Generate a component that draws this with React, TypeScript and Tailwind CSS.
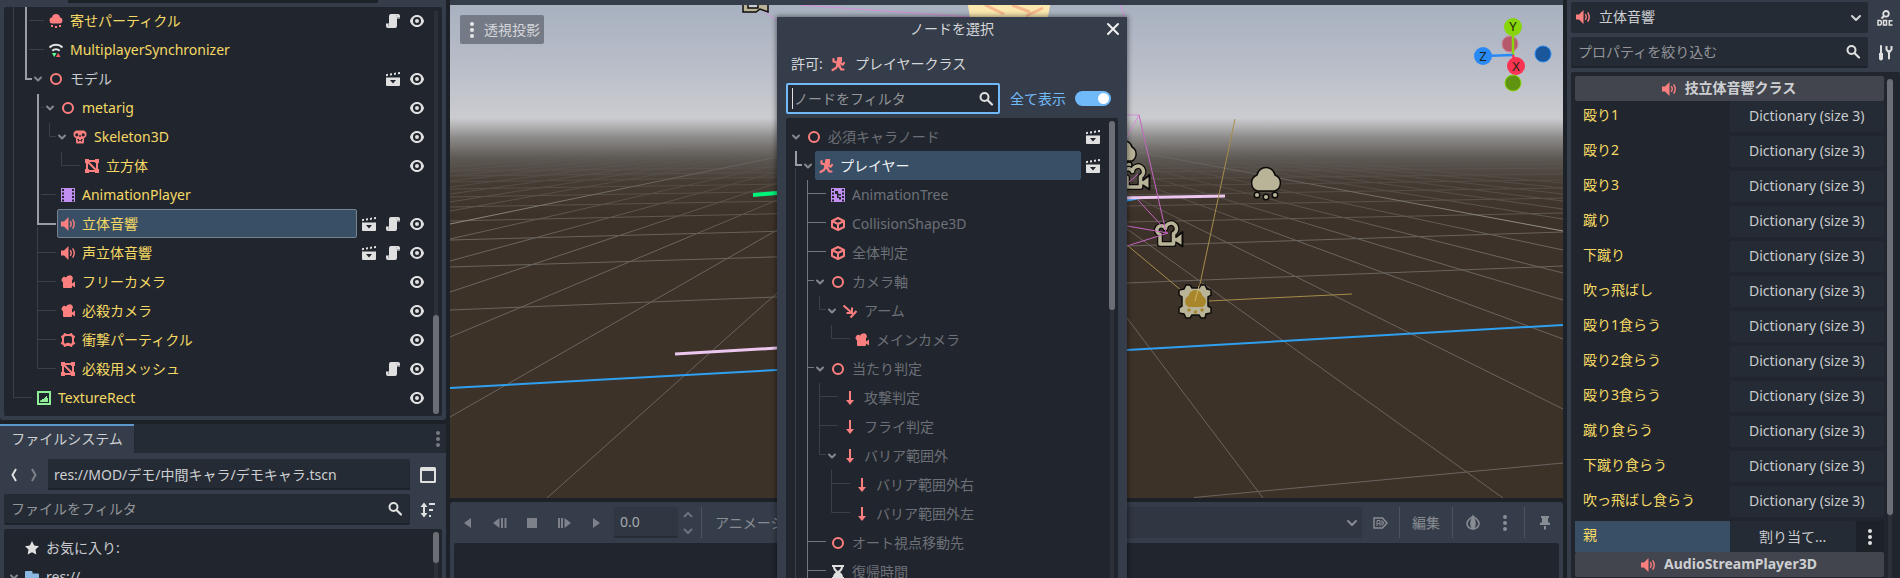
import React from "react";

type IconProps = { className?: string };

function Svg({ className = "", children }: { className?: string; children: React.ReactNode }) {
  return (
    <svg viewBox="0 0 16 16" width="16" height="16" aria-hidden="true" className={"shrink-0 " + className}>
      {children}
    </svg>
  );
}

const RED = "#fc7f7f";
const LIGHT = "#e0e0e0";

const Node3D = () => (
  <Svg>
    <circle cx="8" cy="8" r="5" fill="none" stroke={RED} strokeWidth="2" />
  </Svg>
);
const Cloud = () => (
  <Svg>
    <path fill={RED} d="M8 1a4 4 0 0 0-3.9 3.2A3.2 3.2 0 0 0 4.200 10.500h7.600a3.200 3.200 0 0 0 .1-6.300A4 4 0 0 0 8 1z" />
    <path fill={RED} d="M3 12h2v2H3zM7 13h2v2H7zM11 12h2v2h-2z" />
  </Svg>
);
const Sync = () => (
  <Svg>
    <path d="M1.500 5.500a9 9 0 0 1 13 0M4.300 8.800a5.500 5.500 0 0 1 7.400 0" fill="none" stroke={LIGHT} strokeWidth="2" />
    <path d="M4 11h4.500L6.200 15z" fill="#5fff97" />
    <path d="M8 15h4.500L10.200 11z" fill="#ff5f5f" />
  </Svg>
);
const Skull = () => (
  <Svg>
    <path
      fillRule="evenodd"
      fill={RED}
      d="M5 1.500A4 4 0 0 0 1.500 5c0 2 .8 3.500 2.500 4v4.500a1 1 0 0 0 1 1h6a1 1 0 0 0 1-1V9c1.700-.5 2.500-2 2.500-4A4 4 0 0 0 11 1.500zM4.800 4.200a1.600 1.600 0 1 1 0 3.200 1.600 1.600 0 0 1 0-3.200zm6.400 0a1.600 1.600 0 1 1 0 3.200 1.600 1.600 0 0 1 0-3.200zM7.300 6h1.400v2H7.300zM5.500 10H7v1.300h2V10h1.500v1.300H9.800v1.500H9v-.8H7v.8h-.8v-1.500h-.7z"
    />
  </Svg>
);
const Mesh = () => (
  <Svg>
    <path d="M3 3h10v10H3zM3 3l10 10" fill="none" stroke={RED} strokeWidth="2" />
    <path fill={RED} d="M1 1h4v4H1zM11 1h4v4h-4zM1 11h4v4H1zM11 11h4v4h-4z" />
  </Svg>
);
const Film = () => (
  <Svg>
    <path
      fillRule="evenodd"
      fill="#c38ef1"
      d="M1 1h14v14H1zM2 2v2h2V2zm0 3.500v2h2v-2zM2 9v2h2V9zm0 3.500v2h2v-2zM12 2v2h2V2zm0 3.500v2h2v-2zM12 9v2h2V9zm0 3.500v2h2v-2z"
    />
  </Svg>
);
const FilmTree = () => (
  <Svg>
    <path
      fillRule="evenodd"
      fill="#c38ef1"
      d="M1 1h14v14H1zM2 2v2h2V2zm0 3.500v2h2v-2zM2 9v2h2V9zm0 3.500v2h2v-2zM12 2v2h2V2zm0 3.500v2h2v-2zM12 9v2h2V9zm0 3.500v2h2v-2z"
    />
    <path d="M5 4h3v3H5zM7 6h1.500v1H11v1.500H8.500V10H11v2.500H9V11H7z" fill="#21262e" />
  </Svg>
);
const Speaker = ({ className }: IconProps) => (
  <Svg className={className}>
    <path fill={RED} d="M8.500 1v14L4 10.500H1v-5h3z" />
    <path d="M10.300 5.200q1.800 2.800 0 5.600M12.600 3.300q3.200 4.700 0 9.400" fill="none" stroke={RED} strokeWidth="1.400" />
  </Svg>
);
const Camera = () => (
  <Svg>
    <path
      fill={RED}
      d="M9 1.500A3 3 0 0 0 6.200 3.400 2.800 2.800 0 1 0 3 8.300V13a1 1 0 0 0 1 1h7a1 1 0 0 0 1-1v-1.500l3 2v-6l-3 2V6.500A3 3 0 0 0 9 1.500z"
    />
  </Svg>
);
const Collider = () => (
  <Svg>
    <rect x="3" y="3" width="10" height="10" rx="3" fill="none" stroke={RED} strokeWidth="2" />
    <path fill={RED} d="M5.500 11.500q2.500-1.500 5 0V13h-5z" />
    <g fill={RED}>
      <circle cx="4.800" cy="2.200" r="1.200" />
      <circle cx="11.200" cy="2.200" r="1.200" />
      <circle cx="2.200" cy="4.800" r="1.200" />
      <circle cx="13.800" cy="4.800" r="1.200" />
      <circle cx="2.200" cy="11.200" r="1.200" />
      <circle cx="13.800" cy="11.200" r="1.200" />
      <circle cx="4.800" cy="13.800" r="1.200" />
      <circle cx="11.200" cy="13.800" r="1.200" />
    </g>
  </Svg>
);
const TextureRect = () => (
  <Svg>
    <rect x="2" y="2" width="12" height="12" fill="none" stroke="#8eef97" strokeWidth="2" />
    <path fill="#8eef97" d="M4 12v-1.500h1V10h1V9h2V8h1V7h1V6h1v2h1v4z" />
  </Svg>
);
const Runner = () => (
  <Svg>
    <path fill={RED} d="M7.500 1h4.500v4.500L10.500 7v4H7L6 9z" />
    <path
      d="M3.500 3v2.500L7 6.500M7.500 9.500L6 12l-3.500 2M9 10l1.500 2 .5 1.500h2.500M10 6.500l2.500 2.300 1.500-2"
      fill="none"
      stroke={RED}
      strokeWidth="2.200"
      strokeLinejoin="round"
      strokeLinecap="round"
    />
  </Svg>
);
const Cube = () => (
  <Svg>
    <path d="M8 2l6 3v6l-6 3-6-3V5zM2 5l6 3 6-3M8 8v6" fill="none" stroke={RED} strokeWidth="2" strokeLinejoin="round" />
  </Svg>
);
const SpringArm = () => (
  <Svg>
    <path d="M1.500 2.500L10 10M10 4.500V10H4.500M8.500 14.500l6-6.500" fill="none" stroke={RED} strokeWidth="2" />
  </Svg>
);
const Ray = () => (
  <Svg>
    <path d="M7 1h2v9h3l-4 5-4-5h3z" fill={RED} />
  </Svg>
);
const Hourglass = () => (
  <Svg>
    <path
      fillRule="evenodd"
      fill={LIGHT}
      d="M2 1h12v2h-1c0 2.500-1.500 4-3 5.200 1.500 1 3 2.500 3 4.800h1v2H2v-2h1c0-2.300 1.500-3.800 3-4.800C4.500 7 3 5.500 3 3H2zm3 2c.3 1.800 1.500 3 3 4 1.500-1 2.700-2.200 3-4z"
    />
  </Svg>
);
const Star = () => (
  <Svg>
    <path fill={LIGHT} d="M8 1l2.200 4.500 4.800.7-3.500 3.400.8 4.900L8 12.200l-4.300 2.300.8-4.900L1 6.200l4.800-.7z" />
  </Svg>
);
const Folder = () => (
  <Svg>
    <path fill="#8ab8e0" d="M1 3a1 1 0 0 1 1-1h5.500a1 1 0 0 1 1 1v1.500H14a1 1 0 0 1 1 1V13a1 1 0 0 1-1 1H2a1 1 0 0 1-1-1z" />
  </Svg>
);
const Eye = () => (
  <Svg>
    <path
      fillRule="evenodd"
      fill={LIGHT}
      d="M8 2C4.400 2 2 4.700 1 7.800v.4C2 11.300 4.400 14 8 14s6-2.700 7-5.800v-.4C14 4.700 11.600 2 8 2zm0 2a4 4 0 0 1 0 8 4 4 0 0 1 0-8zm0 2a2 2 0 1 0 0 4 2 2 0 0 0 0-4z"
    />
  </Svg>
);
const Script = () => (
  <Svg>
    <path fill={LIGHT} d="M6 1a2 2 0 0 0-2 2v7.500H1V13a2 2 0 0 0 2 2h7a2 2 0 0 0 2-2V5.500h3V3a2 2 0 0 0-2-2z" />
    <path fill="#a3a5a8" d="M11 2h1v3h3V4h-3zM3 11h1v2.500H3z" />
  </Svg>
);
const Clapper = () => (
  <Svg>
    <path fill={LIGHT} d="M1 3.200l2-.4v2l-2 .4zM5 2.600l2-.4v2l-2 .4zM9 1.900l2-.3v2l-2 .3zM13 1.300l2-.3v2l-2 .3z" />
    <path fillRule="evenodd" fill={LIGHT} d="M1 6.500h14V14a1 1 0 0 1-1 1H2a1 1 0 0 1-1-1zM5 9l3 3.500L11 9z" />
  </Svg>
);
const Magnifier = () => (
  <Svg>
    <circle cx="6.500" cy="6" r="4" fill="none" stroke={LIGHT} strokeWidth="2" />
    <path d="M9.500 9l4.500 4.500" stroke={LIGHT} strokeWidth="2.200" strokeLinecap="round" />
  </Svg>
);
const Chevron = ({ className }: IconProps) => (
  <Svg className={className}>
    <path d="M4 6l4 4 4-4" fill="none" stroke="currentColor" strokeWidth="2" strokeLinecap="round" strokeLinejoin="round" />
  </Svg>
);
const Dots = ({ className }: IconProps) => (
  <Svg className={className}>
    <circle cx="8" cy="2" r="2" fill="currentColor" />
    <circle cx="8" cy="8" r="2" fill="currentColor" />
    <circle cx="8" cy="14" r="2" fill="currentColor" />
  </Svg>
);

type TreeItem = {
  level: number;
  label: string;
  icon: React.ReactNode;
  open?: boolean;
  tone?: "gold" | "light" | "dim" | "bright";
  selected?: boolean;
  boxed?: boolean;
  buttons?: string;
};

const PAD = ["pl-1", "pl-4", "pl-7", "pl-10", "pl-13", "pl-16"];
const TONES = {
  gold: "text-[#f5d964]",
  light: "text-[#c9cbce]",
  dim: "text-[#6d7077]",
  bright: "text-[#f2f3f4]",
};

function TreeRow({ item }: { item: TreeItem }) {
  const buttons = item.buttons ?? "";
  return (
    <li className={"flex h-[29px] shrink-0 items-center pr-[17px] " + PAD[item.level]}>
      <span className="flex w-[13px] shrink-0 items-center">
        {item.open && (
          <button aria-label={item.label + " を折りたたむ"} className="block">
            <svg viewBox="0 0 12 12" width="12" height="12" aria-hidden="true">
              <path d="M3 4.500l3 3 3-3" fill="none" stroke="#85888e" strokeWidth="2" strokeLinecap="round" strokeLinejoin="round" />
            </svg>
          </button>
        )}
      </span>
      <button
        className={
          "flex h-full min-w-0 flex-1 items-center gap-[6px] border px-[2px] text-left whitespace-nowrap " +
          (item.selected
            ? "rounded-[2px] bg-[#384f66] " + (item.boxed ? "border-[#76828f] " : "border-[#384f66] ")
            : "border-transparent ") +
          TONES[item.tone ?? "gold"]
        }
      >
        {item.icon}
        <span>{item.label}</span>
      </button>
      {buttons && (
        <span className="ml-1 flex shrink-0 gap-2">
          {buttons.includes("c") && <button aria-label="シーンを開く"><Clapper /></button>}
          {buttons.includes("s") && <button aria-label="スクリプトを開く"><Script /></button>}
          {buttons.includes("e") && <button aria-label="表示切り替え"><Eye /></button>}
        </span>
      )}
    </li>
  );
}

const SCENE: TreeItem[] = [
  { level: 2, label: "寄せパーティクル", icon: <Cloud />, buttons: "se" },
  { level: 2, label: "MultiplayerSynchronizer", icon: <Sync /> },
  { level: 2, label: "モデル", icon: <Node3D />, open: true, tone: "light", buttons: "ce" },
  { level: 3, label: "metarig", icon: <Node3D />, open: true, buttons: "e" },
  { level: 4, label: "Skeleton3D", icon: <Skull />, open: true, buttons: "e" },
  { level: 5, label: "立方体", icon: <Mesh />, buttons: "e" },
  { level: 3, label: "AnimationPlayer", icon: <Film /> },
  { level: 3, label: "立体音響", icon: <Speaker />, selected: true, boxed: true, buttons: "cse" },
  { level: 3, label: "声立体音響", icon: <Speaker />, buttons: "cse" },
  { level: 3, label: "フリーカメラ", icon: <Camera />, buttons: "e" },
  { level: 3, label: "必殺カメラ", icon: <Camera />, buttons: "e" },
  { level: 3, label: "衝撃パーティクル", icon: <Collider />, buttons: "e" },
  { level: 3, label: "必殺用メッシュ", icon: <Mesh />, buttons: "se" },
  { level: 1, label: "TextureRect", icon: <TextureRect />, buttons: "e" },
];

const PICKER: TreeItem[] = [
  { level: 0, label: "必須キャラノード", icon: <Node3D />, open: true, tone: "dim", buttons: "c" },
  { level: 1, label: "プレイヤー", icon: <Runner />, open: true, tone: "bright", selected: true, buttons: "c" },
  { level: 2, label: "AnimationTree", icon: <FilmTree />, tone: "dim" },
  { level: 2, label: "CollisionShape3D", icon: <Cube />, tone: "dim" },
  { level: 2, label: "全体判定", icon: <Cube />, tone: "dim" },
  { level: 2, label: "カメラ軸", icon: <Node3D />, open: true, tone: "dim" },
  { level: 3, label: "アーム", icon: <SpringArm />, open: true, tone: "dim" },
  { level: 4, label: "メインカメラ", icon: <Camera />, tone: "dim" },
  { level: 2, label: "当たり判定", icon: <Node3D />, open: true, tone: "dim" },
  { level: 3, label: "攻撃判定", icon: <Ray />, tone: "dim" },
  { level: 3, label: "フライ判定", icon: <Ray />, tone: "dim" },
  { level: 3, label: "バリア範囲外", icon: <Ray />, open: true, tone: "dim" },
  { level: 4, label: "バリア範囲外右", icon: <Ray />, tone: "dim" },
  { level: 4, label: "バリア範囲外左", icon: <Ray />, tone: "dim" },
  { level: 2, label: "オート視点移動先", icon: <Node3D />, tone: "dim" },
  { level: 2, label: "復帰時間", icon: <Hourglass />, tone: "dim" },
];

const FILES: TreeItem[] = [
  { level: 0, label: "お気に入り:", icon: <Star />, tone: "light" },
  { level: 0, label: "res://", icon: <Folder />, open: true, tone: "light" },
];

const PROPERTIES = [
  "殴り1", "殴り2", "殴り3", "蹴り", "下蹴り", "吹っ飛ばし",
  "殴り1食らう", "殴り2食らう", "殴り3食らう", "蹴り食らう", "下蹴り食らう", "吹っ飛ばし食らう",
];

function SceneGuides() {
  return (
    <svg viewBox="4 5 438 406" width="438" height="406" fill="none" aria-hidden="true" className="pointer-events-none absolute top-0 left-0">
      <path
        stroke="#3b4048"
        d="M13.500 5V396.500H32M29 19.500H44M29 48.500H44M41 106.500H44M49.500 122V135.500H56M61.500 151V164.500H80M41 193.500H56M37.500 226V367.500H56M37.500 251.500H56M37.500 280.500H56M37.500 309.500H56M37.500 338.500H56"
      />
      <path stroke="#9a9da1" strokeWidth="2" d="M26 5V78H32M38 93V223H56" />
    </svg>
  );
}

function PickerGuides() {
  return (
    <svg viewBox="786 122 332 464" width="332" height="464" fill="none" aria-hidden="true" className="pointer-events-none absolute top-0 left-0">
      <path
        stroke="#3b4048"
        d="M795.500 168V586M819.500 296V309.500H826M831.500 325V338.500H850M819.500 383V454.500H826M819.500 396.500H838M819.500 425.500H838M831.500 470V512.500H850M831.500 483.500H850"
      />
      <path
        stroke="#74777c"
        d="M807.500 180V586M807.500 193.500H826M807.500 222.500H826M807.500 251.500H826M807.500 280.500H814M807.500 367.500H814M807.500 541.500H826M807.500 570.500H826"
      />
      <path stroke="#9a9da1" strokeWidth="2" d="M796 151V165H802" />
    </svg>
  );
}

function SearchBox({ id, label, className = "px-[7px]" }: { id: string; label: string; className?: string }) {
  return (
    <div className={"flex h-[31px] min-w-0 flex-1 items-center rounded-[2px] bg-[#252b34] " + className}>
      <input
        id={id}
        aria-label={label}
        placeholder={label}
        className="min-w-0 flex-1 bg-transparent text-[#c9cbce] outline-none placeholder:text-[#92959a] placeholder:opacity-100"
      />
      <Magnifier />
    </div>
  );
}

function LeftDocks() {
  return (
    <aside className="flex w-[446px] shrink-0 flex-col gap-1">
      <section className="flex h-[420px] shrink-0 flex-col rounded-b-[3px] bg-[#363d4a] px-1 pb-1">
        <div className="mr-16 mb-1 ml-16 h-[3px] shrink-0 bg-[#1e232a]" />
        <div className="relative flex min-h-0 flex-1 flex-col justify-end overflow-hidden rounded-[2px] bg-[#21262e] pb-1">
          <div className="relative shrink-0">
            <SceneGuides />
            <ul className="relative">{SCENE.map((i) => <TreeRow key={i.label} item={i} />)}</ul>
          </div>
          <span className="absolute top-1 right-1 bottom-[2px] w-[4px] bg-[#2c3139]" />
          <span className="absolute right-[3px] bottom-[2px] h-[99px] w-[6px] rounded-full bg-[#6b6e74]" />
        </div>
      </section>
      <section className="flex min-h-0 flex-1 flex-col bg-[#363d4a]">
        <div className="flex h-[29px] shrink-0 items-center justify-between rounded-t-[2px] bg-[#252b34]">
          <button className="h-full w-[134px] border-t-2 border-[#5b98cd] bg-[#363d4a] pb-[2px] text-[#cdcfd2]">ファイルシステム</button>
          <button aria-label="ドックメニュー" className="text-[#777a80]"><Dots /></button>
        </div>
        <div className="flex min-h-0 flex-1 flex-col gap-1 px-1 pt-[6px]">
          <div className="flex shrink-0 items-center">
            <button aria-label="戻る" className="flex w-5 justify-center text-[#e0e0e0]">
              <svg viewBox="0 0 8 16" width="8" height="16" fill="none"><path d="M6 2L2.500 8 6 14" stroke="currentColor" strokeWidth="2" /></svg>
            </button>
            <button aria-label="進む" className="mr-1 flex w-5 justify-center text-[#7e8289]">
              <svg viewBox="0 0 8 16" width="8" height="16" fill="none"><path d="M2 2l3.500 6L2 14" stroke="currentColor" strokeWidth="2" /></svg>
            </button>
            <input
              aria-label="パス"
              defaultValue="res://MOD/デモ/中間キャラ/デモキャラ.tscn"
              className="h-[31px] min-w-0 flex-1 rounded-t-[2px] border-b-2 border-[#1e232b] bg-[#252b34] px-[6px] text-[#cdcfd2] outline-none"
            />
            <button aria-label="分割モード" className="flex w-8 justify-center pl-1">
              <svg viewBox="0 0 16 16" width="16" height="16"><path fillRule="evenodd" fill={LIGHT} d="M1.500 0h13A1.500 1.500 0 0 1 16 1.500v13a1.500 1.500 0 0 1-1.500 1.500h-13A1.500 1.500 0 0 1 0 14.500v-13A1.500 1.500 0 0 1 1.500 0zM2 4v10h12V4z" /></svg>
            </button>
          </div>
          <div className="flex shrink-0 items-center">
            <SearchBox id="file-filter" label="ファイルをフィルタ" className="border-b-2 border-[#1e232b] px-[7px]" />
            <button aria-label="並べ替え" className="flex w-8 justify-center pl-1">
              <Svg>
                <path d="M4 4v8" stroke={LIGHT} strokeWidth="2" />
                <path d="M4 .5L7.500 5h-7zM4 15.500L7.500 11h-7zM9 1h6v2H9zM9 7h4v2H9zM9 13h2v2H9z" fill={LIGHT} />
              </Svg>
            </button>
          </div>
          <div className="relative min-h-0 flex-1 overflow-hidden rounded-t-[2px] bg-[#21262e] pt-1">
            <ul>{FILES.map((i) => <TreeRow key={i.label} item={i} />)}</ul>
            <span className="absolute top-1 right-1 bottom-0 w-[4px] bg-[#2c3139]" />
            <span className="absolute top-[3px] right-[3px] h-[31px] w-[6px] rounded-full bg-[#6b6e74]" />
          </div>
        </div>
      </section>
    </aside>
  );
}

const CAMERA_REELS = "M8 14.500A4.500 4.500 0 1 1 13.500 8.500A5.500 5.500 0 1 1 21.500 13.500V24H8z";
const CAMERA_LENS = "M23.500 17.500L30.500 12V26.500L23.500 22z";

function CameraGizmo({ x, y }: { x: number; y: number }) {
  return (
    <g transform={`translate(${x} ${y})`} fill="none" strokeLinejoin="round">
      <path d={CAMERA_REELS} stroke="#0c0b09" strokeWidth="6" />
      <path d={CAMERA_LENS} fill="#b9b498" stroke="#0c0b09" strokeWidth="2" />
      <path d={CAMERA_REELS} stroke="#b9b498" strokeWidth="3.500" />
      <path d="M21 19.700h5" stroke="#b9b498" strokeWidth="3.500" />
    </g>
  );
}

function SceneView() {
  return (
    <svg viewBox="450 5 1113 493" preserveAspectRatio="xMidYMid slice" aria-label="3Dビュー" className="absolute inset-0 h-full w-full">
      <defs>
        <linearGradient id="sky" x1="0" y1="0" x2="0" y2="1">
          <stop offset="0" stopColor="#a8b1c0" />
          <stop offset="0.120" stopColor="#b8bdc8" />
          <stop offset="0.229" stopColor="#cbccd0" />
          <stop offset="0.245" stopColor="#b4b4b5" />
          <stop offset="0.270" stopColor="#8b8987" />
          <stop offset="0.310" stopColor="#5e5954" />
          <stop offset="0.360" stopColor="#443b33" />
          <stop offset="0.430" stopColor="#3d3229" />
          <stop offset="1" stopColor="#3d3228" />
        </linearGradient>
        <linearGradient id="fade" x1="0" y1="142" x2="0" y2="240" gradientUnits="userSpaceOnUse">
          <stop offset="0" stopColor="#fff" stopOpacity="0" />
          <stop offset="0.500" stopColor="#fff" stopOpacity="0.500" />
          <stop offset="1" stopColor="#fff" />
        </linearGradient>
        <mask id="horizon" maskUnits="userSpaceOnUse" x="450" y="5" width="1113" height="493">
          <rect x="450" y="5" width="1113" height="493" fill="url(#fade)" />
        </mask>
      </defs>
      <rect x="450" y="5" width="1113" height="493" fill="url(#sky)" />
      <g mask="url(#horizon)" fill="none" stroke="#6a6560" strokeWidth="1">
        <path d="M450 239L777 165M450 261L777 172M450 292L777 183M450 337L777 200M450 417L777 230M547 498L777 293M450 211L777 153M450 202L777 150M450 194L777 148M450 187L777 146M450 181L777 144M450 176L777 143M450 171L777 142M450 167L777 141" />
        <path d="M450 310L1127 283 1563 266M450 267L1127 246 1563 232M450 240L1127 222 1563 213M450 221L1127 206 1563 198M450 207L1127 195 1563 188M450 197L1127 186 1563 180M450 189L1127 179 1563 174M450 182L1127 172 1563 168M450 176L1563 164M450 171L1563 160M1194 497.500L1563 463" />
        <path d="M1127 318L1263 498M1127 229L1310 360 1503 498M1127 193L1563 409M1127 178L1563 339M1127 170L1563 300M1127 163L1563 273M1127 157L1563 250M1127 149L1563 219M1127 148L1563 209M1127 146L1563 201M1127 145L1563 194M1127 144L1563 188M1127 143L1563 183" />
        <path d="M450 224L777 157M1127 150L1563 231" stroke="#a09e9a" />
      </g>
      <path d="M450 388L777 370 1127 350 1563 325" fill="none" stroke="#2f9ff0" strokeWidth="2" />
      <path d="M675 354L777 348" stroke="#ecc6ee" strokeWidth="3" />
      <path d="M753 195L777 193" stroke="#00f57a" strokeWidth="4" />
      <path d="M1120 203L1140 199V197H1120z" fill="#2f9ff0" />
      <path d="M1120 198L1225 196" stroke="#ecc6ee" strokeWidth="3" />
      <g fill="none" stroke="#c565c4">
        <path d="M1127 115H1139M1127 137L1139 115M758 6L780 24M800 5L970 17M1120 5L1127 22" stroke="#d58fd8" />
      </g>
      <path d="M1235 119L1200 284 1195 301M1127 245L1182 291M1208 301L1352 294" fill="none" stroke="#a58d4b" />
      <path d="M967 0H1051L1048 17H970z" fill="#fbe8ae" />
      <path d="M985 5L1004 14M1012 5L1030 12M1026 16L1043 8" stroke="#f6b98e" strokeWidth="3" />
      <g fill="#b9b498" stroke="#0c0b09" strokeWidth="1.500">
        <path d="M743 0V12H756L760 9 768 12V0z" />
        <path d="M748 0V8H758V0z" fill="#cacdd4" />
        <path d="M1120 142a8 8 0 0 1 12 5 8 8 0 0 1 0 14h-12z" />
        <circle cx="1129" cy="165" r="3" />
        <path d="M1266 167.500a9 9 0 0 0-9 7.500 8.500 8.500 0 0 0 .5 16h17a8.500 8.500 0 0 0 .5-16 9 9 0 0 0-9-7.500z" />
        <circle cx="1257" cy="195" r="2.800" />
        <circle cx="1266" cy="197" r="2.800" />
        <circle cx="1275" cy="195" r="2.800" />
        <path d="M1184 289l2-4h4l2 3h7l2-3h4l2 4 4 1v5l-3 2v9l3 2v5l-5 1-1 4h-4l-2-3h-7l-2 3h-4l-2-4-5-1v-5l3-2v-9l-3-2v-5z" />
      </g>
      <CameraGizmo x={1119} y={163} />
      <CameraGizmo x={1152} y={220} />
      <path d="M1139 115L1166 232M1138 200L1162 226M1127 226L1168 233 1127 246M1129 182L1138 174" fill="none" stroke="#c565c4" />
      <path d="M1195.500 290a7.500 7.500 0 0 0-7 6 6 6 0 0 0 .5 11h13a6 6 0 0 0 .5-11 7.500 7.500 0 0 0-7-6z" fill="#a8862b" />
      <g fill="#a8862b">
        <circle cx="1189" cy="310" r="1.700" />
        <circle cx="1195.500" cy="312" r="1.700" />
        <circle cx="1202" cy="310" r="1.700" />
      </g>
      <path d="M1199 286l-4 15" stroke="#d0b56a" />
      <circle cx="1510" cy="44" r="8" fill="#b85a6e" stroke="#c98594" />
      <path d="M1513 27V55" stroke="#88d60a" strokeWidth="2.500" />
      <path d="M1483 56L1513 55" stroke="#2989f5" strokeWidth="2.500" />
      <path d="M1513 55L1516 66" stroke="#fa3352" strokeWidth="2.500" />
      <circle cx="1543" cy="54" r="8" fill="#19579a" stroke="#2989f5" />
      <circle cx="1513" cy="83" r="8" fill="#609410" stroke="#88d60a" />
      <circle cx="1513" cy="27" r="9" fill="#88d60a" />
      <circle cx="1483" cy="56" r="9" fill="#2989f5" />
      <circle cx="1516" cy="66" r="9" fill="#fa3352" />
      <g fontFamily="Noto Sans, sans-serif" fontSize="13" textAnchor="middle" fill="#1b2410">
        <text x="1513" y="31">Y</text>
        <text x="1483" y="61">Z</text>
        <text x="1516" y="71">X</text>
      </g>
    </svg>
  );
}

const Divider = () => <span className="h-[31px] w-px shrink-0 bg-[#4c535f]" />;

const TRANSPORT = [
  { label: "逆再生", d: "M11 3v10L4 8z" },
  { label: "最後から逆再生", d: "M7.500 3v10L1 8zM9 3h2v10H9zM12.500 3h2v10h-2z" },
  { label: "停止", d: "M3 3h10v10H3z" },
  { label: "最初から再生", d: "M2 3h2v10H2zM5 3h2v10H5zM8.500 3v10L15 8z" },
  { label: "再生", d: "M5 3v10l7-5z" },
];

function Center() {
  return (
    <main className="flex min-w-0 flex-1 flex-col">
      <div className="h-[5px] shrink-0 bg-[#363d4a]" />
      <section className="relative h-[493px] shrink-0 overflow-hidden">
        <SceneView />
        <button className="absolute top-[10px] left-[10px] flex h-[29px] w-[84px] items-center gap-1 rounded-[2px] bg-[#747a86] pl-1 text-[#d5d7da]">
          <Dots className="text-[#e6e6e6]" />
          <span>透視投影</span>
        </button>
      </section>
      <section className="mt-1 flex min-h-0 flex-1 flex-col rounded-t-[3px] bg-[#363d4a] px-1">
        <div className="flex h-[41px] shrink-0 items-center justify-between text-[#888c93]">
          <div className="flex items-center pl-[6px]">
            <div className="flex gap-4">
              {TRANSPORT.map((t) => (
                <button key={t.label} aria-label={t.label}>
                  <Svg><path d={t.d} fill="#7d8189" /></Svg>
                </button>
              ))}
            </div>
            <input
              aria-label="再生位置"
              defaultValue="0.0"
              className="ml-[10px] h-[31px] w-16 rounded-t-[2px] border-b-2 border-[#272c36] bg-[#303642] px-[6px] text-[#a6a9ae] outline-none"
            />
            <svg viewBox="0 0 12 24" width="12" height="24" fill="none" aria-hidden="true" className="mr-[7px] ml-1">
              <path d="M2 6l4-4 4 4M2 18l4 4 4-4" stroke="#6c717a" strokeWidth="2" />
            </svg>
            <Divider />
            <button className="ml-[13px]">アニメーション</button>
          </div>
          <div className="flex items-center">
            <div className="relative">
              <select aria-label="アニメーション" className="block h-[31px] w-[300px] appearance-none rounded-[2px] bg-[#303642] px-2 outline-none" />
              <Chevron className="pointer-events-none absolute top-2 right-[2px]" />
            </div>
            <button aria-label="自動再生" className="mr-[11px] ml-[10px]">
              <Svg>
                <path d="M2 3h8.500l4.500 5-4.500 5H2z" fill="none" stroke="#888c93" strokeWidth="1.500" />
                <path d="M5 11V5.500h3V11M5 8.500h3M10 5.500v5L12 8z" fill="none" stroke="#888c93" />
              </Svg>
            </button>
            <Divider />
            <button className="mx-3">編集</button>
            <Divider />
            <button aria-label="オニオンスキン" className="ml-3">
              <Svg>
                <path d="M8 1c2 2.500 6 3.500 6 7.500 0 3-2.500 5.500-6 5.500s-6-2.500-6-5.500C2 4.500 6 3.500 8 1z" fill="none" stroke="#888c93" strokeWidth="1.500" />
                <path d="M8 1c2 3 2.800 5 2.800 7.500S10 13 8 15c-2-2-2.800-4-2.800-6.500S6 4 8 1z" fill="#888c93" />
              </Svg>
            </button>
            <button aria-label="オプション" className="mr-[11px] ml-4"><Dots /></button>
            <Divider />
            <button aria-label="ピン" className="mr-[6px] ml-3">
              <Svg><path d="M4 1h8v2h-1v4l2 1v2H3V8l2-1V3H4zM7 11h2v3l-1 1-1-1z" fill="#888c93" /></Svg>
            </button>
          </div>
        </div>
        <div className="min-h-0 flex-1 rounded-t-[2px] bg-[#21262e]" />
      </section>
    </main>
  );
}

function ClassHeader({ label }: { label: string }) {
  return (
    <h2 className="flex h-[25px] shrink-0 items-center justify-center gap-2 rounded-[2px] bg-[#42454d] pr-[2px] font-bold text-[#cdcfd2]">
      <Speaker />
      <span className="pb-[2px]">{label}</span>
    </h2>
  );
}

function Inspector() {
  return (
    <aside className="flex w-[333px] shrink-0 flex-col gap-1 bg-[#363d4a] pt-[2px] pl-1">
      <div className="flex shrink-0 items-center">
        <div className="relative min-w-0 flex-1">
          <Speaker className="pointer-events-none absolute top-[7px] left-1" />
          <select aria-label="ノード" className="block h-[31px] w-full appearance-none rounded-[2px] bg-[#252b34] pr-6 pb-[2px] pl-7 text-[#cdcfd2] outline-none">
            <option>立体音響</option>
          </select>
          <Chevron className="pointer-events-none absolute top-2 right-1 text-[#d5d6d8]" />
        </div>
        <button aria-label="ドキュメントを開く" className="flex w-8 justify-center pl-[2px]">
          <Svg>
            <circle cx="9" cy="3.800" r="2.800" fill="none" stroke={LIGHT} strokeWidth="1.800" />
            <path d="M7 6L4.500 8.500" stroke={LIGHT} strokeWidth="2" />
            <path d="M1 10.500h2.200q1.300.5 1.300 2.200t-1.300 2.300H1zM6.500 10.500h3V15h-3zM15.500 10.700h-3.200V15h3.200" fill="none" stroke={LIGHT} strokeWidth="1.500" />
          </Svg>
        </button>
      </div>
      <div className="flex shrink-0 items-center">
        <SearchBox id="prop-filter" label="プロパティを絞り込む" className="border-b-2 border-[#1e232b] px-[7px]" />
        <button aria-label="オブジェクト設定" className="flex w-8 justify-center pl-[2px]">
          <Svg>
            <path d="M4 1v8M12 6v7.500" stroke={LIGHT} strokeWidth="2" strokeLinecap="round" />
            <path d="M2 8h4v5.500a2 2 0 0 1-4 0z" fill={LIGHT} />
            <path d="M9.500 1v3.500L11 6.500h2l1.500-2V1" fill="none" stroke={LIGHT} strokeWidth="2" />
          </Svg>
        </button>
      </div>
      <div className="relative min-h-0 flex-1 overflow-hidden rounded-t-[2px] bg-[#21262e] pt-1 pr-[13px] pl-1">
        <div className="mr-[3px] flex flex-col">
          <ClassHeader label="技立体音響クラス" />
          <div className="flex flex-col gap-1">
            {PROPERTIES.map((name) => (
              <div key={name} className="grid h-[31px] grid-cols-2 items-center">
                <span className="pb-[3px] pl-2 text-[#f5d964]">{name}</span>
                <button className="h-full rounded-[2px] bg-[#252b34] pb-[2px] text-[#c9cbce]">Dictionary (size 3)</button>
              </div>
            ))}
            <div className="grid h-[31px] grid-cols-2">
              <span className="flex items-center bg-[#384f66] pb-[3px] pl-2 text-[#f5d964]">親</span>
              <span className="flex bg-[#1d2228]">
                <button className="flex-1 rounded-[2px] bg-[#252b34] text-[#c9cbce]">割り当て...</button>
                <button aria-label="親のオプション" className="flex w-7 items-center justify-center text-[#e0e0e0]"><Dots /></button>
              </span>
            </div>
          </div>
          <ClassHeader label="AudioStreamPlayer3D" />
        </div>
        <span className="absolute top-2 right-2 bottom-0 w-[4px] bg-[#2c3139]" />
        <span className="absolute top-[7px] right-[7px] h-[436px] w-[6px] rounded-full bg-[#6b6e74]" />
      </div>
    </aside>
  );
}

function NodePicker() {
  return (
    <div className="pointer-events-none absolute inset-0 flex justify-center overflow-hidden pt-[17px] pl-1">
      <div role="dialog" aria-label="ノードを選択" className="pointer-events-auto flex h-full w-[350px] flex-col bg-[#363d4a] px-[9px] shadow-[0_0_5px_1px_rgba(0,0,0,0.45)]">
        <header className="relative -mx-[9px] flex h-6 shrink-0 items-center justify-center text-[#d5d7da]">
          <h1>ノードを選択</h1>
          <button aria-label="閉じる" className="absolute right-[6px]">
            <Svg><path d="M3 3l10 10M13 3L3 13" stroke="#f0f0f0" strokeWidth="2" strokeLinecap="round" /></Svg>
          </button>
        </header>
        <div className="mt-[11px] flex h-6 shrink-0 items-center pl-[5px] text-[#d5d7da]">
          <span className="w-[39px]">許可:</span>
          <Runner />
          <span className="ml-[9px]">プレイヤークラス</span>
        </div>
        <div className="mt-[7px] mb-1 flex h-[31px] shrink-0 items-center">
          <div className="relative flex w-[214px]">
            <SearchBox id="node-filter" label="ノードをフィルタ" className="border-2 border-[#70bafa] pr-1 pl-[6px]" />
            <span className="absolute top-[5px] left-[6px] h-[21px] w-px bg-[#e0e0e0]" />
          </div>
          <label className="ml-[10px] flex items-center gap-[9px] text-[#70bafa]">
            全て表示
            <input
              type="checkbox"
              role="switch"
              defaultChecked
              className="flex h-[15px] w-9 appearance-none items-center justify-end rounded-full bg-[#70bafa] pr-[2px] before:block before:h-[11px] before:w-[11px] before:rounded-full before:bg-white"
            />
          </label>
        </div>
        <div className="relative min-h-0 flex-1 overflow-hidden rounded-t-[2px] bg-[#21262e] pt-1">
          <div className="relative">
            <PickerGuides />
            <ul className="relative">{PICKER.map((i) => <TreeRow key={i.label} item={i} />)}</ul>
          </div>
          <span className="absolute top-1 right-1 bottom-0 w-[4px] bg-[#2c3139]" />
          <span className="absolute top-[3px] right-[3px] h-[189px] w-[6px] rounded-full bg-[#6b6e74]" />
        </div>
      </div>
    </div>
  );
}

export default function App() {
  return (
    <div
      lang="ja"
      className="relative flex h-screen gap-1 overflow-hidden bg-[#1d2229] font-['Noto_Sans','Noto_Sans_CJK_JP',sans-serif] text-sm"
    >
      <LeftDocks />
      <Center />
      <Inspector />
      <NodePicker />
    </div>
  );
}
